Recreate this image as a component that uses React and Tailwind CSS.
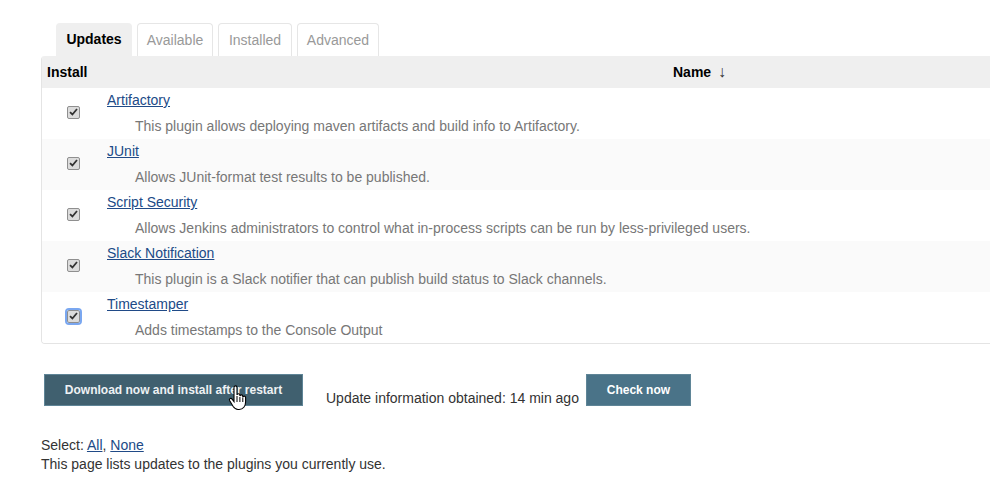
import React from "react";

const plugins = [
  { name: "Artifactory", desc: "This plugin allows deploying maven artifacts and build info to Artifactory." },
  { name: "JUnit", desc: "Allows JUnit-format test results to be published." },
  { name: "Script Security", desc: "Allows Jenkins administrators to control what in-process scripts can be run by less-privileged users." },
  { name: "Slack Notification", desc: "This plugin is a Slack notifier that can publish build status to Slack channels." },
  { name: "Timestamper", desc: "Adds timestamps to the Console Output", focused: true },
];

const tabs = [
  { label: "Updates", w: "w-[76px]" },
  { label: "Available", w: "w-[76px]" },
  { label: "Installed", w: "w-[74px]" },
  { label: "Advanced", w: "w-[82px]" },
];

const CheckBox = ({ focused }) => (
  <span
    className={`flex h-[13px] w-[13px] items-center justify-center rounded-[2px] border border-[#8f8f8f] bg-[#dcdcdc] ${
      focused ? "outline outline-2 outline-[#7aa7f0]" : ""
    }`}
  >
    <svg width="9" height="8" viewBox="0 0 9 8">
      <path d="M1 4.2 L3.4 6.5 L8 1" fill="none" stroke="#333" strokeWidth="1.8" />
    </svg>
  </span>
);

const HandCursor = () => (
  <svg className="absolute left-[228px] top-[385px]" width="20" height="26" viewBox="0 0 20 26">
    <path
      d="M6 2.5c0-1 .7-1.6 1.5-1.6S9 1.5 9 2.5V10c.2-.9.8-1.3 1.5-1.3.8 0 1.4.6 1.4 1.4v1c.2-.8.8-1.2 1.5-1.2.8 0 1.4.6 1.4 1.4v.9c.2-.7.8-1.1 1.4-1.1.8 0 1.4.6 1.4 1.4V17c0 4-2.4 7.5-6.5 7.5H10c-2.4 0-3.6-1.1-5-3.2L1.6 15.6c-.4-.8-.2-1.6.5-2 .7-.4 1.5-.2 2 .5L6 16.6V2.5z"
      fill="#fff"
      stroke="#000"
      strokeWidth="1.1"
    />
    <path d="M9 11v6M11.9 12v5M14.8 12.5v4.5" stroke="#000" strokeWidth="1" />
  </svg>
);

export default function App() {
  return (
    <div
      className="relative h-[498px] w-[990px] overflow-hidden bg-white text-[14px] text-[#333]"
      style={{ fontFamily: '"Liberation Sans", Arial, sans-serif' }}
    >
      <div className="pl-[41px] pt-[23px]">
        <div className="flex gap-[5px] pl-[15px]">
          {tabs.map((t, i) => (
            <div
              key={t.label}
              className={`flex h-[33px] items-center justify-center rounded-t-[4px] ${t.w} ${
                i === 0
                  ? "bg-[#efefef] font-bold text-black"
                  : "border border-b-0 border-[#e6e6e6] bg-white text-[#999]"
              }`}
            >
              {t.label}
            </div>
          ))}
        </div>

        <div className="w-[1254px] overflow-hidden rounded-[4px] border border-t-0 border-[#e4e4e4]">
          <div className="flex h-[32px] items-center bg-[#efefef] font-bold text-black">
            <div className="w-[63px] pl-[5px]">Install</div>
            <div className="flex-1 text-center">
              Name <span className="ml-[3px] text-[16px] font-normal text-[#333]">↓</span>
            </div>
          </div>
          {plugins.map((p, i) => (
            <div
              key={p.name}
              className={`flex h-[51px] items-center ${i % 2 === 1 ? "bg-[#fafafa]" : "bg-white"}`}
            >
              <div className="mb-[3px] flex w-[62px] justify-center">
                <CheckBox focused={p.focused} />
              </div>
              <div className="flex flex-col pl-[3px]">
                <a href="#" className="leading-[17px] text-[#204a87] underline">
                  {p.name}
                </a>
                <div className="mt-[9px] pl-[28px] leading-[17px] text-[#777]">{p.desc}</div>
              </div>
            </div>
          ))}
        </div>

        <div className="mt-[30px] flex items-start">
          <button className="ml-[3px] h-[32px] w-[259px] border border-[#5f8597] bg-[#40606f] text-[12px] font-bold text-[#eef2f4]">
            Download now and install after restart
          </button>
          <span className="ml-[23px] mt-[16px] leading-[17px] text-[#333]">
            Update information obtained: 14 min ago
          </span>
          <button className="ml-[7px] h-[32px] w-[105px] border border-[#5f8597] bg-[#4a7388] text-[12px] font-bold text-white">
            Check now
          </button>
        </div>

        <div className="mt-[29px] leading-[19px]">
          <div>
            Select:{" "}
            <a href="#" className="text-[#204a87] underline">All</a>,{" "}
            <a href="#" className="text-[#204a87] underline">None</a>
          </div>
          <div>This page lists updates to the plugins you currently use.</div>
        </div>
      </div>
      <HandCursor />
    </div>
  );
}
